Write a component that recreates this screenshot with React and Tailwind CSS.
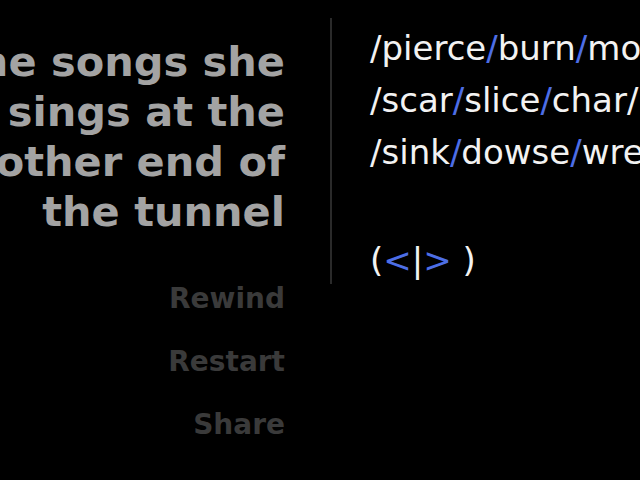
import React from 'react';

const lyric = ['the songs she', 'sings at the', 'other end of', 'the tunnel'];

const verbs = [
  ['pierce', 'burn', 'mourn'],
  ['scar', 'slice', 'char', ''],
  ['sink', 'dowse', 'wreck'],
];

function Slash({ blue }) {
  return <span className={blue ? 'text-[#4d6ee6]' : 'text-[#f2f2f2]'}>/</span>;
}

function VerbLine({ words }) {
  return (
    <div className="whitespace-nowrap h-[52px] leading-[52px]">
      {words.map((w, i) => (
        <span key={i}>
          <Slash blue={i > 0 && w !== ''} />
          {w}
        </span>
      ))}
    </div>
  );
}

export default function App() {
  return (
    <div
      className="w-[640px] h-[480px] bg-black overflow-hidden flex"
      style={{ fontFamily: '"DejaVu Sans", Verdana, sans-serif' }}
    >
      <div className="w-[285px] shrink-0 flex flex-col items-end pt-[37px]">
        <div className="flex flex-col items-end text-[41.5px] font-bold text-[#a3a3a3] leading-[50px]">
          {lyric.map((l) => (
            <div key={l} className="whitespace-nowrap">{l}</div>
          ))}
        </div>
        <div className="flex flex-col items-end gap-[30px] mt-[45px] text-[28px] font-bold text-[#3a3a3a] leading-[33px]">
          <button>Rewind</button>
          <button>Restart</button>
          <button>Share</button>
        </div>
      </div>
      <div className="ml-[45px] mt-[18px] w-[2px] h-[266px] bg-[#2a2a2a] shrink-0" />
      <div className="pl-[38px] pt-[22px] text-[34px] text-[#f2f2f2]">
        {verbs.map((v, i) => (
          <VerbLine key={i} words={v} />
        ))}
        <div className="mt-[56px] whitespace-nowrap h-[52px] leading-[52px]">
          (<span className="text-[#4d6ee6]">&lt;</span>|<span className="text-[#4d6ee6]">&gt;</span> )
        </div>
      </div>
    </div>
  );
}
